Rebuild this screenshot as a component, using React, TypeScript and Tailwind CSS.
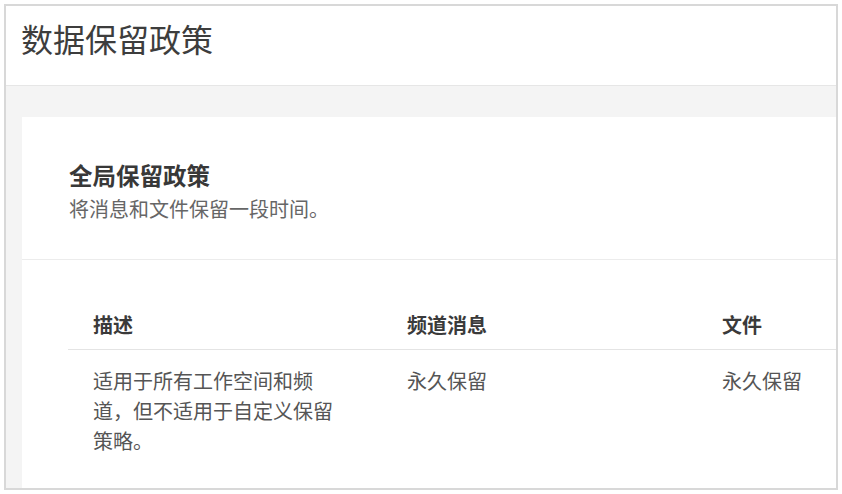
export default function App() {
  const rows = [
    {
      desc: "适用于所有工作空间和频道，但不适用于自定义保留策略。",
      messages: "永久保留",
      files: "永久保留",
    },
  ];

  return (
    <div className="w-[842px] h-[494px] bg-white p-[4px] font-['Noto_Sans_CJK_SC','Noto_Sans',sans-serif]">
      <div className="w-[834px] h-[486px] border-2 border-[#d8d8d8] overflow-hidden flex flex-col">
        <header className="h-[80px] shrink-0 bg-white border-b border-[#e6e6e6] pl-[15px] pt-[12px]">
          <h1 className="text-[32px] leading-[40px] text-[#3d3d3d] font-normal">数据保留政策</h1>
        </header>

        <main className="flex-1 bg-[#f4f4f4] pt-[31px] pl-[16px]">
          <section className="w-[900px] h-full bg-white">
            <div className="pt-[42px] pb-[34px] pl-[47px] border-b border-[#ececec]">
              <h2 className="text-[23.5px] leading-[33px] font-bold text-[#383838]">全局保留政策</h2>
              <p className="text-[20px] leading-[33px] text-[#666]">将消息和文件保留一段时间。</p>
            </div>

            <div className="pl-[46px] pt-[50px]">
              <div className="grid grid-cols-[314px_315px_1fr] border-b border-[#e4e4e4] pb-[9px] text-[20px] leading-[30px] font-bold text-[#3a3a3a]">
                <div className="px-[25px]">描述</div>
                <div className="px-[25px]">频道消息</div>
                <div className="px-[25px]">文件</div>
              </div>
              {rows.map((row) => (
                <div key={row.desc} className="grid grid-cols-[314px_315px_1fr] pt-[16px] text-[20px] leading-[30px] text-[#555]">
                  <div className="px-[25px]">
                    <p className="w-[250px]">{row.desc}</p>
                  </div>
                  <div className="px-[25px]">{row.messages}</div>
                  <div className="px-[25px]">{row.files}</div>
                </div>
              ))}
            </div>
          </section>
        </main>
      </div>
    </div>
  );
}
